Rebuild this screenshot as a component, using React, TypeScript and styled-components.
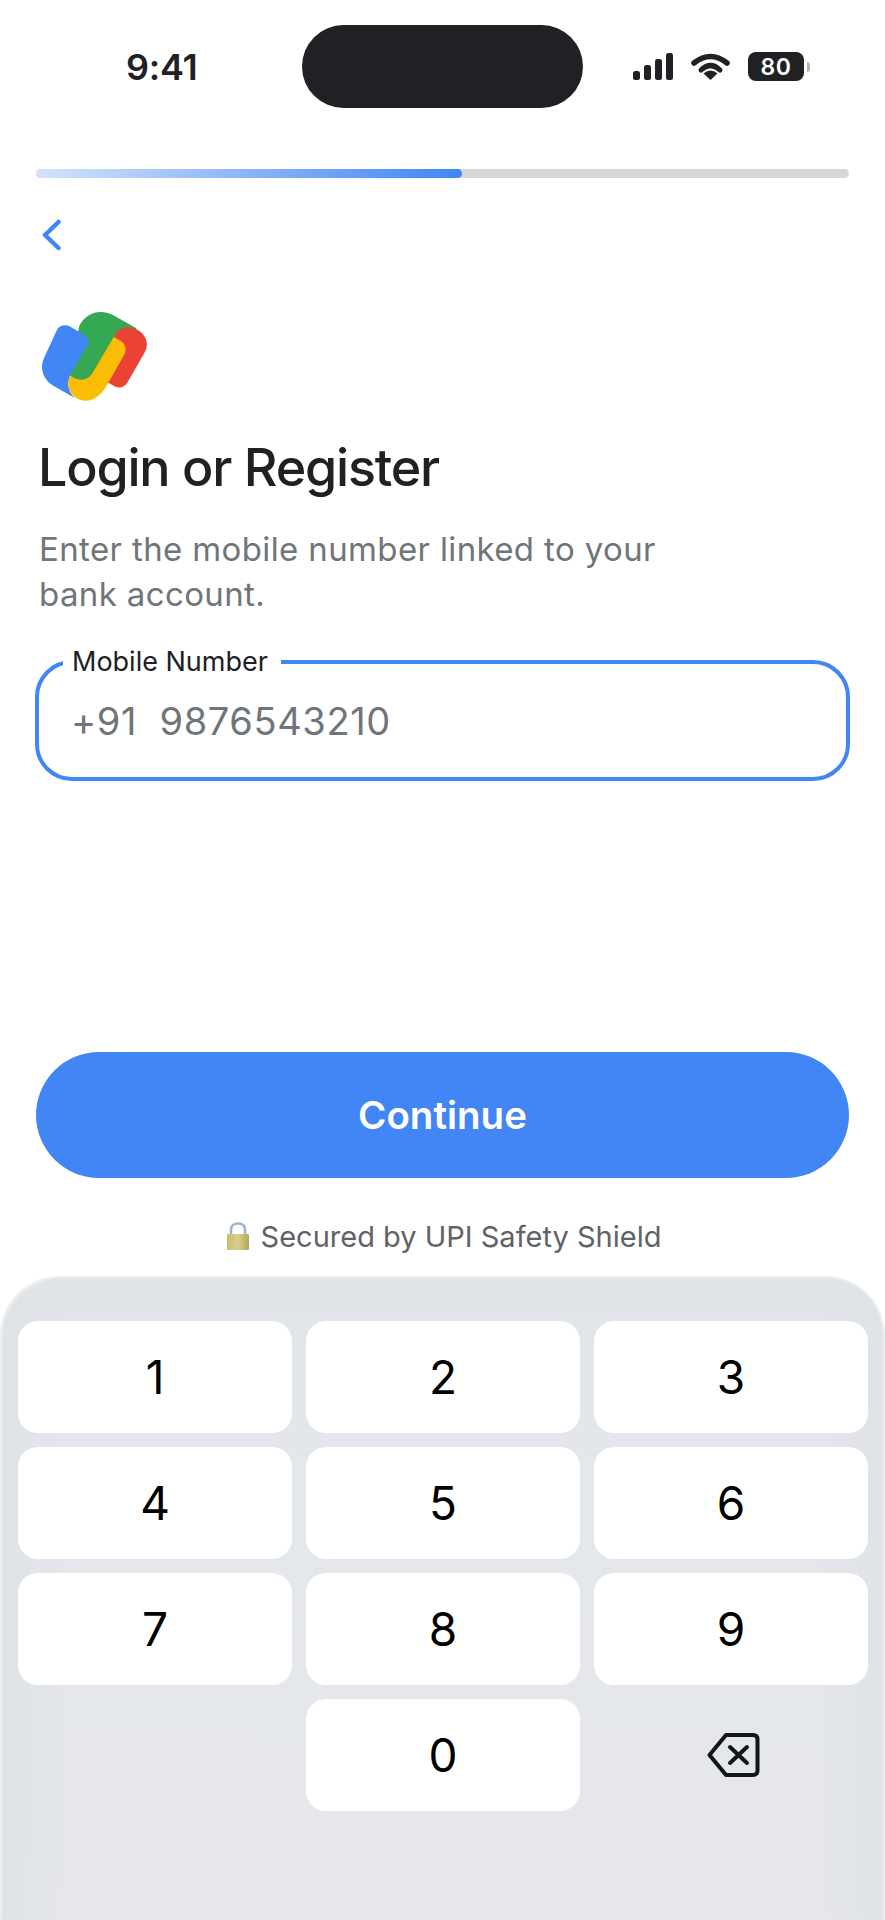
import styled, { createGlobalStyle } from "styled-components";

const FONT = `Inter, "Liberation Sans", sans-serif`;
const KEYS = ["1", "2", "3", "4", "5", "6", "7", "8", "9", "", "0", "back"];

const GlobalStyle = createGlobalStyle`
  html, body {
    margin: 0;
    padding: 0;
    background: #ffffff;
  }
  * {
    box-sizing: border-box;
  }
`;

const Screen = styled.div`
  display: flex;
  flex-direction: column;
  width: 885px;
  height: 1920px;
  font-family: ${FONT};
  background: #ffffff;
  overflow: hidden;
`;

const StatusBar = styled.div`
  display: flex;
  align-items: center;
  height: 108px;
  padding: 25px 0 0 126px;
`;

const Time = styled.div`
  width: 176px;
  font-size: 36px;
  font-weight: 600;
  color: #202124;
  letter-spacing: -0.3px;
`;

const Island = styled.div`
  width: 281px;
  height: 83px;
  border-radius: 42px;
  background: #202124;
`;

const StatusIcons = styled.div`
  display: flex;
  align-items: center;
  gap: 18px;
  margin-left: 50px;
`;

const Battery = styled.div`
  display: flex;
  align-items: center;
  gap: 3px;
`;

const BatteryBody = styled.div`
  display: flex;
  align-items: center;
  justify-content: center;
  width: 56px;
  height: 29px;
  border-radius: 8px;
  background: #202124;
  color: #ffffff;
  font-size: 23px;
  font-weight: 600;
  letter-spacing: 0.5px;
`;

const BatteryCap = styled.div`
  width: 3px;
  height: 10px;
  border-radius: 0 3px 3px 0;
  background: #b4b6b8;
`;

const Track = styled.div`
  height: 9px;
  margin: 61px 36px 0;
  border-radius: 5px;
  background: #d5d8db;
  overflow: hidden;
`;

const Fill = styled.div`
  height: 100%;
  border-radius: 5px;
  background: linear-gradient(90deg, #d2e3fc 0%, #4285f4 100%);
`;

const BackButton = styled.button`
  display: block;
  width: 19px;
  height: 32px;
  margin: 41px 0 0 42px;
  padding: 0;
  border: none;
  background: none;
`;

const LogoWrap = styled.div`
  display: flex;
  margin: 59px 0 0 40px;
`;

const Title = styled.h1`
  margin: 35px 0 0 38px;
  font-size: 52px;
  line-height: 60px;
  font-weight: 500;
  letter-spacing: -1.2px;
  color: #202124;
`;

const Subtitle = styled.p`
  width: 660px;
  margin: 29px 0 0 39px;
  font-size: 33px;
  line-height: 45px;
  font-weight: 400;
  letter-spacing: 0.37px;
  color: #70757a;
`;

const Field = styled.fieldset`
  height: 134px;
  margin: 30px 35px 0;
  padding: 0 0 0 32px;
  border: 4px solid #4285f4;
  border-radius: 37px;
`;

const FieldLabel = styled.legend`
  margin-left: -8px;
  padding: 0 13px 0 9px;
  font-size: 27px;
  line-height: 30px;
  color: #202124;
`;

const FieldValue = styled.div`
  margin-top: 21px;
  font-size: 38px;
  line-height: 46px;
  letter-spacing: 0.6px;
  color: #70757a;
  white-space: pre;
`;

const Actions = styled.div`
  display: flex;
  flex-direction: column;
  align-items: center;
  margin-top: auto;
  padding: 0 36px;
`;

const ContinueButton = styled.button`
  width: 100%;
  height: 126px;
  border: none;
  border-radius: 63px;
  background: #4285f4;
  color: #ffffff;
  font-family: ${FONT};
  font-size: 38.500px;
  font-weight: 600;
`;

const SecureNote = styled.div`
  display: flex;
  align-items: center;
  gap: 11px;
  height: 40px;
  margin: 38px 0 20px 2px;
  font-size: 29px;
  color: #5f6368;
`;

const Keyboard = styled.div`
  display: grid;
  grid-template-columns: repeat(3, 274px);
  grid-auto-rows: 112px;
  gap: 14px;
  height: 644px;
  padding: 45px 17px 0 18px;
  border-radius: 60px 60px 0 0;
  background:
    linear-gradient(90deg, #dfe2e7 0%, rgba(227, 230, 235, 0) 8%),
    linear-gradient(270deg, #dfe2e7 0%, rgba(227, 230, 235, 0) 8%),
    linear-gradient(180deg, #dfe2e7 0%, #e3e6ea 12%, #e5e7eb 100%);
  box-shadow: inset 2px 2px 2px #eef0f2, inset -2px 0 2px #eef0f2;
`;

const Key = styled.button<{ $blank?: boolean }>`
  display: flex;
  align-items: center;
  justify-content: center;
  padding: 0;
  border: none;
  border-radius: 20px;
  background: ${(p) => (p.$blank ? "transparent" : "#ffffff")};
  color: #000000;
  font-family: ${FONT};
  font-size: 46px;
  font-weight: 400;
`;

const BackspaceGlyph = styled.svg`
  margin-left: 4px;
`;

const BackChevron = () => (
  <svg width="19" height="32" viewBox="0 0 19 32" fill="none">
    <path d="M16.500 3 L3 16 L16.500 29" stroke="#4285f4" strokeWidth="4.500" strokeLinecap="round" strokeLinejoin="round" />
  </svg>
);

const Signal = () => (
  <svg width="40" height="27" viewBox="0 0 40 27" fill="#202124">
    <rect x="0" y="18" width="7" height="9" rx="2.500" />
    <rect x="11" y="12" width="7" height="15" rx="2.500" />
    <rect x="22" y="6" width="7" height="21" rx="2.500" />
    <rect x="33" y="0" width="7" height="27" rx="2.500" />
  </svg>
);

const Wifi = () => (
  <svg width="39" height="27" viewBox="0 0 39 27" fill="none">
    <path d="M3 10 Q19.500 -3 36 10" stroke="#202124" strokeWidth="5.500" strokeLinecap="round" />
    <path d="M10 17 Q19.500 8 29 17" stroke="#202124" strokeWidth="5" strokeLinecap="round" />
    <path d="M12.500 20.500 Q19.500 14.500 26.500 20.500 L19.500 27 Z" fill="#202124" />
  </svg>
);

const PayLogo = () => (
  <svg width="108" height="93" viewBox="60 60 325 280">
    <path d="M178 108 C200 65 245 55 285 78 L350 115 L330 160 L225 262 L190 280 L150 262 Z" fill="#34a853" />
    <path d="M285 135 C300 112 325 106 350 118 C378 132 390 160 375 188 L325 275 C315 293 300 297 285 290 L262 277 Z" fill="#ea4335" />
    <path d="M112 118 C122 104 138 104 150 110 L192 134 C207 143 209 156 202 168 L150 258 C140 285 146 308 165 325 L100 288 C70 270 56 235 74 200 Z" fill="#4285f4" />
    <path d="M282 141 L300 151 C318 161 323 180 312 198 L262 285 C240 328 200 345 170 325 C145 310 140 280 151 257 C165 270 200 280 218 250 Z" fill="#fbbc04" />
  </svg>
);

const Padlock = () => (
  <svg width="24" height="28" viewBox="0 0 24 28" fill="none">
    <defs>
      <linearGradient id="lockBody" x1="0" x2="1" y1="0" y2="0">
        <stop offset="0" stopColor="#c9bd6e" />
        <stop offset="0.5" stopColor="#d9d08c" />
        <stop offset="1" stopColor="#b3a75c" />
      </linearGradient>
    </defs>
    <path d="M5 13 V8 C5 3.500 8 1.500 12 1.500 C16 1.500 19 3.500 19 8 V13" stroke="#9db4d0" strokeWidth="2.600" />
    <rect x="1" y="12" width="22" height="16" rx="1" fill="url(#lockBody)" />
  </svg>
);

const BackspaceIcon = () => (
  <BackspaceGlyph width="53" height="46" viewBox="0 0 53 46" fill="none" stroke="#111418" strokeWidth="4" strokeLinecap="round" strokeLinejoin="round">
    <path d="M19 3 H46 Q50.500 3 50.500 7.500 V38.500 Q50.500 43 46 43 H19 L2.500 23 Z" />
    <path d="M23 15 L40 31 M40 15 L23 31" />
  </BackspaceGlyph>
);

export default function App() {
  const progress = 426 / 813;

  return (
    <Screen>
      <GlobalStyle />
      <StatusBar>
        <Time>9:41</Time>
        <Island />
        <StatusIcons>
          <Signal />
          <Wifi />
          <Battery>
            <BatteryBody>80</BatteryBody>
            <BatteryCap />
          </Battery>
        </StatusIcons>
      </StatusBar>

      <Track>
        <Fill style={{ width: `${progress * 100}%` }} />
      </Track>
      <BackButton aria-label="Back">
        <BackChevron />
      </BackButton>
      <LogoWrap>
        <PayLogo />
      </LogoWrap>

      <Title>Login or Register</Title>
      <Subtitle>Enter the mobile number linked to your bank account.</Subtitle>

      <Field>
        <FieldLabel>Mobile Number</FieldLabel>
        <FieldValue>+91  9876543210</FieldValue>
      </Field>

      <Actions>
        <ContinueButton>Continue</ContinueButton>
        <SecureNote>
          <Padlock />
          Secured by UPI Safety Shield
        </SecureNote>
      </Actions>

      <Keyboard>
        {KEYS.map((k, i) => (
          <Key key={i} $blank={k === "" || k === "back"}>
            {k === "back" ? <BackspaceIcon /> : k}
          </Key>
        ))}
      </Keyboard>
    </Screen>
  );
}
